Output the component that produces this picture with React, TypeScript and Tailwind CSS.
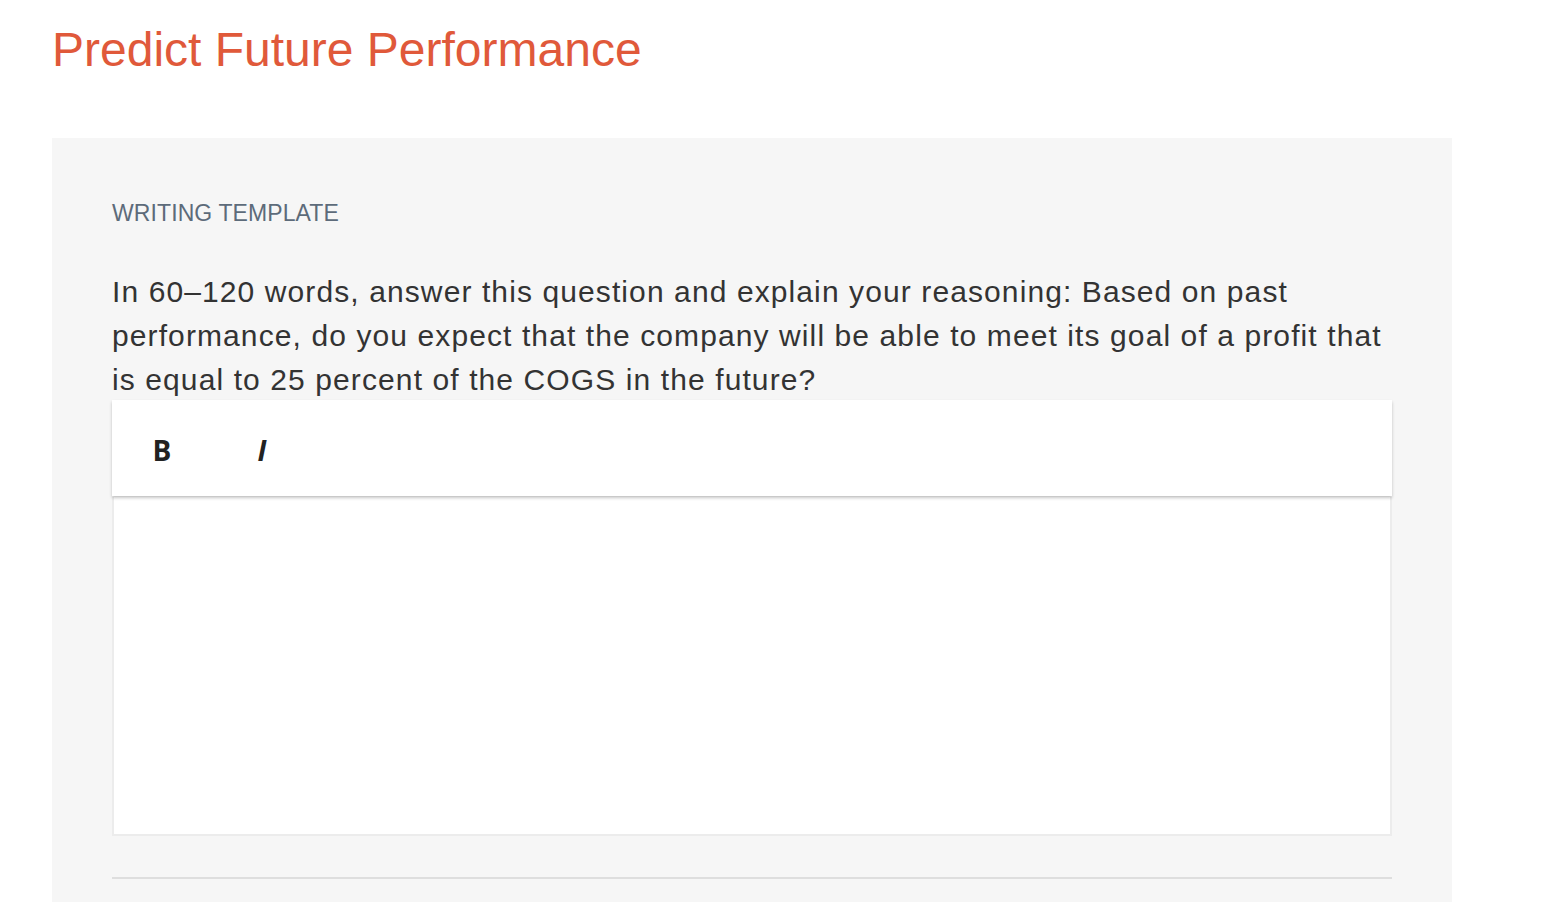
import React from "react";

export default function App() {
  return (
    <div className="min-h-screen bg-white" style={{ fontFamily: '"Liberation Sans", Arial, sans-serif' }}>
      <h1 className="pl-[52px] pt-[26px] text-[48px] leading-none font-normal text-[#e0593a]">
        Predict Future Performance
      </h1>
      <div className="ml-[52px] mt-[64px] w-[1400px] bg-[#f6f6f6] px-[60px] pt-[64px] pb-[40px]">
        <div className="text-[23px] leading-none tracking-[0.1px] text-[#5d6b7a]">WRITING TEMPLATE</div>
        <p className="mt-[45px] mb-[-2px] text-[30px] leading-[44px] tracking-[1.1px] text-[#333333] whitespace-nowrap">
          In 60–120 words, answer this question and explain your reasoning: Based on past
          <br />
          performance, do you expect that the company will be able to meet its goal of a profit that
          <br />
          is equal to 25 percent of the COGS in the future?
        </p>
        <div className="relative flex h-[96px] items-center bg-white pt-[4px] shadow-[0_2px_3px_rgba(0,0,0,0.22)]">
          <button
            className="flex h-full w-[100px] items-center justify-center text-[28px] font-bold text-[#222222]"
            style={{ fontFamily: '"Open Sans", sans-serif' }}
          >
            B
          </button>
          <button
            className="flex h-full w-[100px] items-center justify-center text-[28px] font-bold italic text-[#222222]"
            style={{ fontFamily: '"Open Sans", sans-serif' }}
          >
            I
          </button>
        </div>
        <div className="mt-[1px] h-[339px] border-x-2 border-b-2 border-[#ececec] bg-white" />
        <div className="mt-[41px] h-[2px] bg-[#dedede]" />
      </div>
    </div>
  );
}
